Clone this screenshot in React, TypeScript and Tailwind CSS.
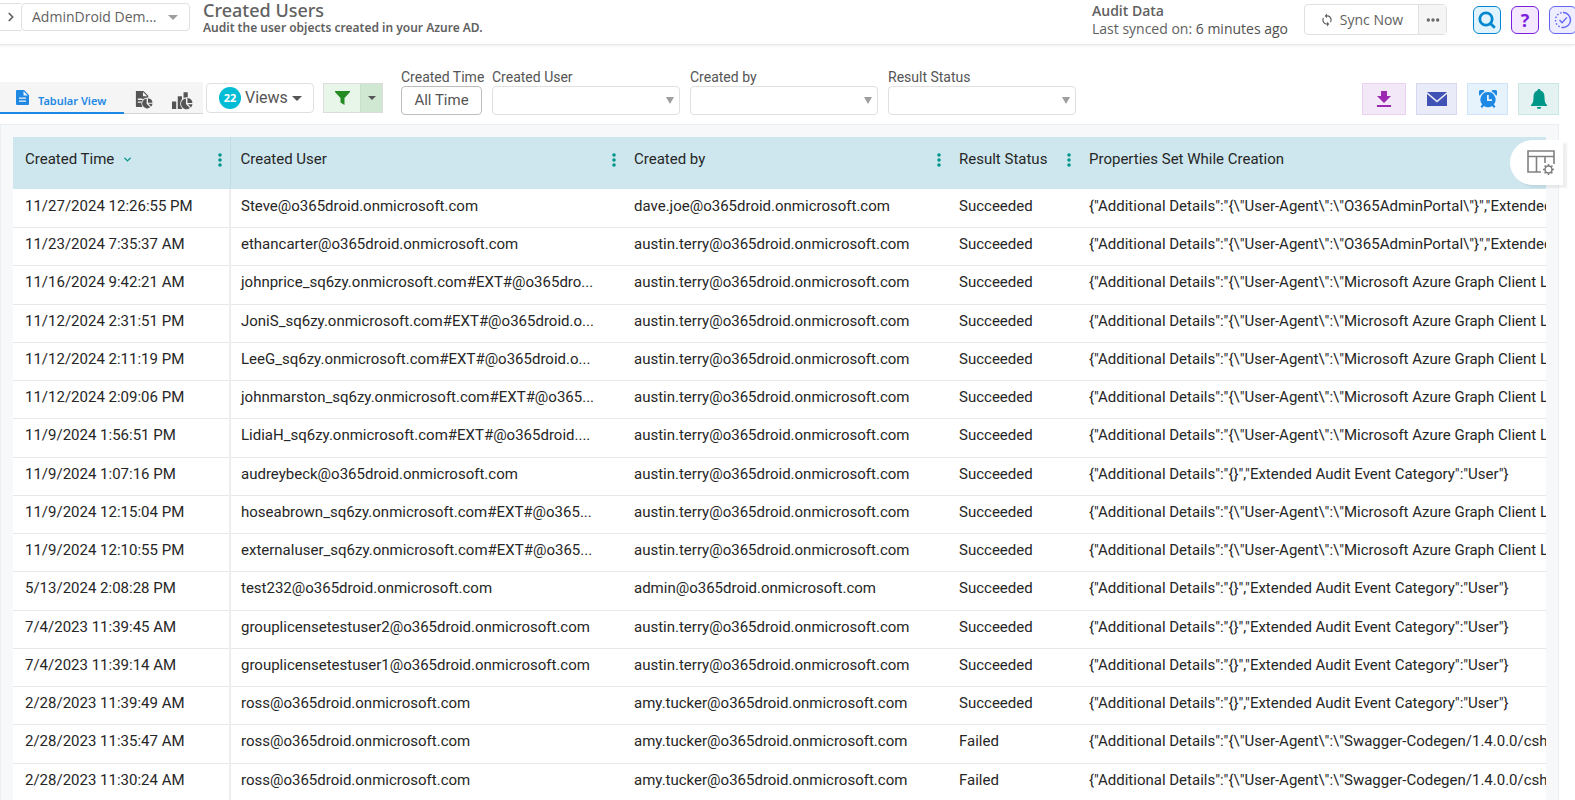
import clsx from 'clsx';
import { ChevronDown, ChevronRight, Ellipsis } from 'lucide-react';
import { MdSync } from 'react-icons/md';

const AZURE = '{"Additional Details":"{\\"User-Agent\\":\\"Microsoft Azure Graph Client Library 2.1.17-internal\\"}","Extended Audit Event Category":"User"}';
const PORTAL = '{"Additional Details":"{\\"User-Agent\\":\\"O365AdminPortal\\"}","Extended Audit Event Category":"User"}';
const EMPTY = '{"Additional Details":"{}","Extended Audit Event Category":"User"}';
const SWAGGER = '{"Additional Details":"{\\"User-Agent\\":\\"Swagger-Codegen/1.4.0.0/csharp\\"}","Extended Audit Event Category":"User"}';

const AUSTIN = 'austin.terry@o365droid.onmicrosoft.com';
const AMY = 'amy.tucker@o365droid.onmicrosoft.com';

const rows = [
    ['11/27/2024 12:26:55 PM', 'Steve@o365droid.onmicrosoft.com', 'dave.joe@o365droid.onmicrosoft.com', 'Succeeded', PORTAL],
    ['11/23/2024 7:35:37 AM', 'ethancarter@o365droid.onmicrosoft.com', AUSTIN, 'Succeeded', PORTAL],
    ['11/16/2024 9:42:21 AM', 'johnprice_sq6zy.onmicrosoft.com#EXT#@o365dro...', AUSTIN, 'Succeeded', AZURE],
    ['11/12/2024 2:31:51 PM', 'JoniS_sq6zy.onmicrosoft.com#EXT#@o365droid.o...', AUSTIN, 'Succeeded', AZURE],
    ['11/12/2024 2:11:19 PM', 'LeeG_sq6zy.onmicrosoft.com#EXT#@o365droid.o...', AUSTIN, 'Succeeded', AZURE],
    ['11/12/2024 2:09:06 PM', 'johnmarston_sq6zy.onmicrosoft.com#EXT#@o365...', AUSTIN, 'Succeeded', AZURE],
    ['11/9/2024 1:56:51 PM', 'LidiaH_sq6zy.onmicrosoft.com#EXT#@o365droid....', AUSTIN, 'Succeeded', AZURE],
    ['11/9/2024 1:07:16 PM', 'audreybeck@o365droid.onmicrosoft.com', AUSTIN, 'Succeeded', EMPTY],
    ['11/9/2024 12:15:04 PM', 'hoseabrown_sq6zy.onmicrosoft.com#EXT#@o365...', AUSTIN, 'Succeeded', AZURE],
    ['11/9/2024 12:10:55 PM', 'externaluser_sq6zy.onmicrosoft.com#EXT#@o365...', AUSTIN, 'Succeeded', AZURE],
    ['5/13/2024 2:08:28 PM', 'test232@o365droid.onmicrosoft.com', 'admin@o365droid.onmicrosoft.com', 'Succeeded', EMPTY],
    ['7/4/2023 11:39:45 AM', 'grouplicensetestuser2@o365droid.onmicrosoft.com', AUSTIN, 'Succeeded', EMPTY],
    ['7/4/2023 11:39:14 AM', 'grouplicensetestuser1@o365droid.onmicrosoft.com', AUSTIN, 'Succeeded', EMPTY],
    ['2/28/2023 11:39:49 AM', 'ross@o365droid.onmicrosoft.com', AMY, 'Succeeded', EMPTY],
    ['2/28/2023 11:35:47 AM', 'ross@o365droid.onmicrosoft.com', AMY, 'Failed', SWAGGER],
    ['2/28/2023 11:30:24 AM', 'ross@o365droid.onmicrosoft.com', AMY, 'Failed', SWAGGER],
];

const columns = [
    { title: 'Created Time', width: 'w-[217px]' },
    { title: 'Created User', width: 'w-[394px]' },
    { title: 'Created by', width: 'w-[325px]' },
    { title: 'Result Status', width: 'w-[130px]' },
    { title: 'Properties Set While Creation', width: '' },
];

const Caret = ({ className = 'h-[5px] w-[10px]' }: { className?: string }) => (
    <svg viewBox="0 0 10 5" className={className} fill="currentColor" aria-hidden="true">
        <path d="M0 0h10L5 5z" />
    </svg>
);

const Dots = () => (
    <svg viewBox="0 0 4 14" className="h-[14px] w-1" fill="#009688" aria-hidden="true">
        <circle cx="2" cy="2" r="1.8" />
        <circle cx="2" cy="7" r="1.8" />
        <circle cx="2" cy="12" r="1.8" />
    </svg>
);

const Pie = () => (
    <>
        <circle cx="14" cy="14" r="6.2" fill="#f5f5f5" />
        <path d="M13.3 9v5.400l3.800 3.800A5.200 5.200 0 1 1 13.300 9z" />
        <path d="M14.700 8.600a5.200 5.200 0 0 1 4.800 4.800h-4.800z" />
        <path d="M15.200 14.600h4.300a5.200 5.200 0 0 1-1.500 2.900z" />
    </>
);

const TopBar = () => (
    <header className="flex h-[45px] items-start border-b border-[#e8e8e8] font-['Open_Sans'] text-[#616161] shadow-[0_1px_3px_#0001]">
        <button aria-label="Expand menu" className="mt-[3px] flex h-7 w-[21px] items-center justify-center border-y border-[#e0e0e0]">
            <ChevronRight size={14} strokeWidth={3} />
        </button>
        <button className="mt-[3px] flex h-7 w-[169px] items-center justify-between rounded border border-[#e0e0e0] pr-[11px] pl-[10px] text-sm font-medium">
            AdminDroid Dem...
            <Caret className="h-[5px] w-[10px] text-[#9e9e9e]" />
        </button>
        <div className="ml-[13px] font-['Noto_Sans']">
            <h1 className="text-lg leading-5 font-medium">Created Users</h1>
            <p className="text-[12px] leading-4 font-semibold">Audit the user objects created in your Azure AD.</p>
        </div>
        <div className="ml-auto w-[212px] pt-[2px] text-sm leading-[18px]">
            <p className="font-semibold">Audit Data</p>
            <p>Last synced on: <span className="font-medium text-[#505050]">6 minutes ago</span></p>
        </div>
        <div className="mt-1 flex h-[31px] w-[143px] rounded border border-[#e0e0e0] text-sm">
            <button className="flex flex-1 items-center justify-center gap-[6px]">
                <MdSync size={14} />
                Sync Now
            </button>
            <button aria-label="More sync options" className="flex w-7 items-center justify-center border-l border-[#e0e0e0] bg-[#f5f5f5]">
                <Ellipsis size={16} strokeWidth={3} />
            </button>
        </div>
        <div className="mt-[6px] ml-[26px] flex w-[102px] gap-[10px] overflow-hidden">
            <button aria-label="Search" className="flex size-7 shrink-0 items-center justify-center rounded-md border border-[#0288d1] bg-[#e1f3fc] text-[#0288d1]">
                <svg viewBox="0 0 18 18" className="size-[18px]" fill="none" stroke="currentColor" strokeWidth="2.8">
                    <circle cx="8" cy="8" r="6.2" />
                    <path d="m11.5 11.5 5.300 5.300" />
                </svg>
            </button>
            <button aria-label="Help" className="flex size-7 shrink-0 items-center justify-center rounded-md border border-[#7b1fe0] bg-[#f3e8fd] text-lg leading-5 font-bold text-[#7b1fe0]">?</button>
            <button aria-label="Tasks" className="flex size-7 shrink-0 items-center justify-center rounded-md border border-[#6366f1] bg-[#ededff] text-[#6366f1]">
                <svg viewBox="0 0 18 18" className="size-[18px]" fill="none" stroke="currentColor" strokeWidth="1.4">
                    <path d="M9 1.500a7.500 7.500 0 0 1 0 15" />
                    <path d="M9 16.500a7.500 7.500 0 0 1 0-15" strokeDasharray="1.6 1.8" />
                    <path d="m5.500 9 2.600 2.800 4.800-5.400" />
                </svg>
            </button>
        </div>
    </header>
);

const Filter = ({ label }: { label: string }) => (
    <label className="block w-[188px]">
        <span className="block text-sm leading-[17px]">{label}</span>
        <span className="relative block">
            <select className="h-[29px] w-full appearance-none rounded border border-[#e0e0e0] bg-white">
                <option></option>
            </select>
            <svg viewBox="0 0 8 7" className="pointer-events-none absolute top-[11px] right-[6px] h-[7px] w-2" fill="#9e9e9e" aria-hidden="true">
                <path d="M0 0h8L4 7z" />
            </svg>
        </span>
    </label>
);

const Toolbar = () => (
    <div className="flex h-[79px] items-start pt-6 font-['Roboto'] text-[#555]">
        <div className="mt-[13px] flex h-8 border-b border-[#d5d5d5] bg-[#f5f5f5]">
            <button className="flex h-8 w-[124px] items-center gap-[9px] border-b-2 border-[#1e88e5] pl-4 font-['Noto_Sans'] text-[#1e88e5]">
                <svg viewBox="0 0 13 15" className="h-[15px] w-[13px]" fill="currentColor" aria-hidden="true">
                    <path fillRule="evenodd" d="M1 0h7l5 5v9a1 1 0 0 1-1 1H1a1 1 0 0 1-1-1V1a1 1 0 0 1 1-1zm6.500 1.200v4.300h4.300zM3 7.500v1.300h7V7.500zm0 3v1.300h7v-1.300z" />
                </svg>
                <span className="pt-2 text-[11px] font-semibold">Tabular View</span>
            </button>
            <button aria-label="Report view" className="flex w-[38px] items-center justify-center pt-1">
                <svg viewBox="0 0 20 20" className="size-[19px]" fill="#555">
                    <path fillRule="evenodd" d="M2 1h8l5 5v12H3a1 1 0 0 1-1-1zm7.500 1.200v4.300h4.300zM4 9v1.400h5V9zm0 3v1.400h4V12z" />
                    <Pie />
                </svg>
            </button>
            <button aria-label="Chart view" className="flex w-[41px] items-center justify-center pt-1">
                <svg viewBox="0 0 20 20" className="size-[21px]" fill="#555">
                    <path d="M0 12h4v7H0zM5.500 7h4v12h-4zM11 3h4v9h-4z" />
                    <Pie />
                </svg>
            </button>
        </div>
        <button className="mt-[14px] ml-[3px] flex h-[30px] w-[108px] items-center rounded-sm border border-[#e0e0e0] pl-3 text-base">
            <span className="mr-1 flex size-[22px] items-center justify-center rounded-full bg-[#00bcd4] font-['Noto_Sans'] text-[11px] font-bold text-white">22</span>
            <span className="mr-1">Views</span>
            <Caret />
        </button>
        <div className="mt-[14px] ml-[9px] flex h-[30px] w-[60px] border border-[#dcdcdc]">
            <button aria-label="Filter" className="flex flex-1 items-center justify-center bg-[#e8f5e9]">
                <svg viewBox="0 0 15 14" className="h-[14px] w-[15px]" fill="#228b22">
                    <path d="M0 0h15v1L9.500 7v7L5.500 11.500V7L0 1z" />
                </svg>
            </button>
            <button aria-label="Filter options" className="flex w-[22px] items-center justify-center border-l border-[#c8dfc9] bg-[#d0e8d1]">
                <Caret className="h-1 w-2" />
            </button>
        </div>
        <div className="ml-[18px] flex gap-[10px]">
            <div className="w-[81px] whitespace-nowrap">
                <span id="created-time" className="block text-sm leading-[17px]">Created Time</span>
                <button aria-labelledby="created-time" className="h-[29px] w-full rounded border border-[#bdbdbd] text-[15px]">All Time</button>
            </div>
            <Filter label="Created User" />
            <Filter label="Created by" />
            <Filter label="Result Status" />
        </div>
        <div className="mt-[14px] mr-4 ml-auto flex gap-[10px]">
            <button aria-label="Download" className="flex h-8 w-11 items-center justify-center border border-[#ecd2f0] bg-[#f3e8f8] text-[#9c27b0]">
                <svg viewBox="0 0 14 16" className="h-4 w-[14px]" fill="currentColor">
                    <path d="M4 0h6v5h4L7 12 0 5h4zM0 14h14v2H0z" />
                </svg>
            </button>
            <button aria-label="Email" className="flex h-8 w-[41px] items-center justify-center border border-[#d6d8f0] bg-[#e9ebf8] text-[#3f51b5]">
                <svg viewBox="0 0 20 14" className="h-[14px] w-5" fill="currentColor">
                    <path d="M0 0h20L10 8.500zM0 2l10 8.500L20 2v12H0z" />
                </svg>
            </button>
            <button aria-label="Schedule" className="flex h-8 w-[41px] items-center justify-center border border-[#cfe5f7] bg-[#e6f2fc] text-[#1e88e5]">
                <svg viewBox="0 0 18 18" className="size-[18px]" fill="currentColor">
                    <path d="M0 4.500a3.200 3.200 0 0 1 5.500-3.300 10 10 0 0 0-4.700 4.600A3 3 0 0 1 0 4.500zM18 4.500a3.200 3.200 0 0 0-5.500-3.300 10 10 0 0 1 4.700 4.600 3 3 0 0 0 .800-1.300z" />
                    <path fillRule="evenodd" d="M9 2a7.600 7.600 0 0 1 5.800 12.500L16.500 16.500 15 18l-2-2a7.600 7.600 0 0 1-8 0l-2 2-1.500-1.500 1.700-2A7.600 7.600 0 0 1 9 2zM8 5v6h5V9.300H9.800V5z" />
                </svg>
            </button>
            <button aria-label="Alerts" className="flex h-8 w-[41px] items-center justify-center border border-[#c9e7e3] bg-[#e4f3f1] text-[#009688]">
                <svg viewBox="0 0 16 20" className="h-5 w-4" fill="currentColor">
                    <path d="M8 0c1 0 1.500.700 1.500 1.600 2.600.800 4 3 4 6.400 0 4.500.800 6.500 2.500 8v1H0v-1c1.700-1.500 2.500-3.500 2.500-8 0-3.400 1.400-5.600 4-6.400C6.500.700 7 0 8 0zM5.800 18h4.400a2.200 2 0 0 1-4.400 0z" />
                </svg>
            </button>
        </div>
    </div>
);

const App = () => {
    return (
        <div className="h-screen overflow-hidden bg-white">
            <TopBar />
            <Toolbar />
            <main className="relative mr-4 border border-[#eceff1] bg-[#f6f8fa] px-3 pt-3 font-['Roboto']">
                <table className="w-full table-fixed border-collapse bg-white text-[15px] text-[#262626]">
                    <thead>
                        <tr className="h-[52px] bg-[#cee7ee]">
                            {columns.map((col, i) => (
                                <th key={col.title} className={clsx('pb-2 text-left font-normal', i === 0 ? 'border-r border-[#bfdbe3] pl-3' : 'pl-[10px]', col.width)}>
                                    <div className="flex items-center">
                                        {col.title}
                                        {i === 0 && <ChevronDown size={11} strokeWidth={3} className="ml-2 text-[#009688]" />}
                                        {i < 4 && (
                                            <button aria-label={`${col.title} menu`} className="mr-2 ml-auto pt-[2px]">
                                                <Dots />
                                            </button>
                                        )}
                                    </div>
                                </th>
                            ))}
                        </tr>
                    </thead>
                    <tbody>
                        {rows.map((row) => (
                            <tr key={row[0]} className="h-[38px] border-b border-[#e8e8e8] nth-[4n+3]:h-[39px]">
                                {row.map((cell, i) => (
                                    <td key={i} className={clsx('overflow-hidden pb-1 whitespace-nowrap', i === 0 ? 'border-r-2 border-r-[#eeeeee] pl-3' : 'pl-[10px]')}>
                                        {cell}
                                    </td>
                                ))}
                            </tr>
                        ))}
                    </tbody>
                </table>
                <button aria-label="Column settings" className="absolute top-[15px] -right-[5px] flex h-[45px] w-[53px] items-center justify-center rounded-l-full bg-white pl-2 shadow-[4px_3px_2px_#0001]">
                    <svg viewBox="0 0 28 26" className="h-[26px] w-7" fill="none" stroke="#808080" strokeWidth="1.6">
                        <path d="M14 22H1V1h26v13M1 6.500h26M9.500 6.500V22M18 6.500V13" />
                        <circle cx="21.500" cy="19.500" r="3.500" />
                        <path d="M21.500 14v2M21.500 23v2M16 19.500h2M25 19.500h2M17.600 15.600l1.400 1.400M24 22l1.400 1.400M17.600 23.400l1.400-1.400M24 17l1.400-1.400" />
                    </svg>
                </button>
            </main>
        </div>
    );
};

export default App;
